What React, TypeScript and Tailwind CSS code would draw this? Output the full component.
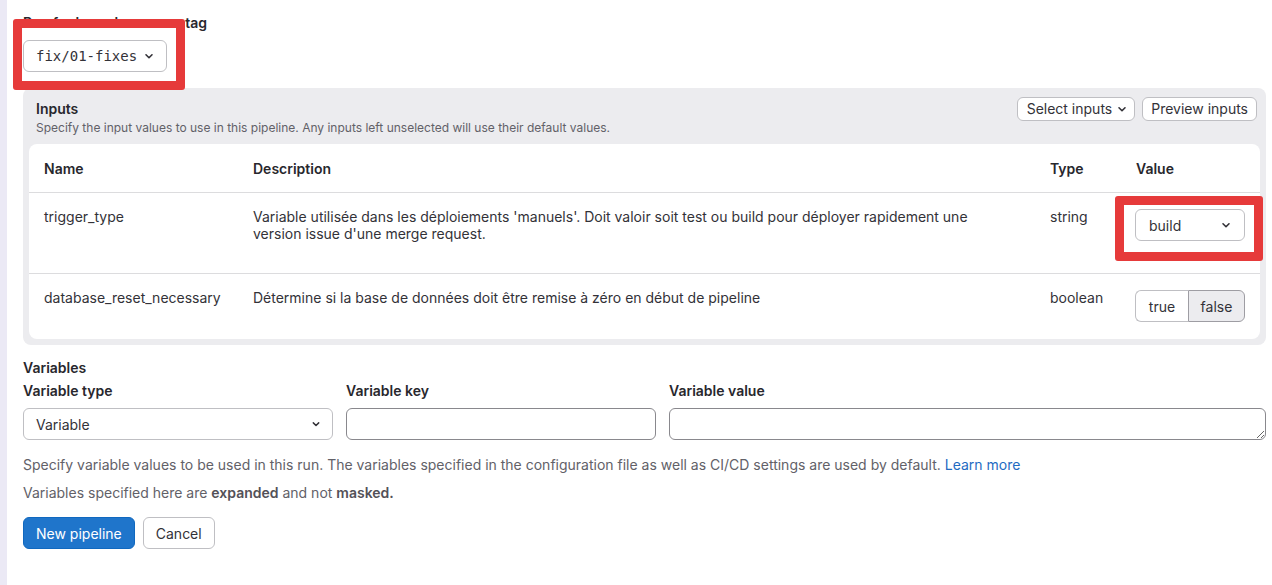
import React from "react";

function Chevron({ className = "" }: { className?: string }) {
  return (
    <svg width="16" height="16" viewBox="0 0 16 16" className={className} fill="none">
      <path d="M5 6.75l3 3 3-3" stroke="currentColor" strokeWidth="1.6" strokeLinecap="round" strokeLinejoin="round" />
    </svg>
  );
}

const rows = [
  {
    name: "trigger_type",
    description:
      "Variable utilisée dans les déploiements 'manuels'. Doit valoir soit test ou build pour déployer rapidement une version issue d'une merge request.",
    type: "string",
    kind: "select",
    rowClass: "grid grid-cols-[209px_797px_86px_1fr] h-[81px] border-b border-[#dcdcde] leading-[17px]",
  },
  {
    name: "database_reset_necessary",
    description: "Détermine si la base de données doit être remise à zéro en début de pipeline",
    type: "boolean",
    kind: "toggle",
    rowClass: "grid grid-cols-[209px_797px_86px_1fr] min-h-[65px] pb-[16px] leading-[17px]",
  },
];

export default function App() {
  return (
    <div className="relative flex min-h-[585px] bg-white text-[14px] text-[#333238] [font-family:Inter,'Noto_Sans',sans-serif]">
      <div className="w-[7px] shrink-0 bg-[#ebe9f5]" />

      <div className="flex-1 pl-4 pr-1.5">
        {/* branch selector */}
        <div className="pt-[13px] text-[14px] font-semibold leading-5 text-[#28272d]">Run for branch name or tag</div>
        <button className="mt-[7px] flex h-8 items-center gap-1 rounded-md border border-[#bfbfc3] bg-white pl-[12px] pr-[9px] text-[#333238] [font-family:'DejaVu_Sans_Mono','Liberation_Mono',monospace]">
          <span className="text-[14px]">fix/01-fixes</span>
          <Chevron />
        </button>

        {/* inputs panel */}
        <div className="mt-4 rounded-lg bg-[#ececef] pb-1.5">
          <div className="flex items-start justify-between pb-[8px] pl-[13px] pr-[9px] pt-[9px]">
            <div className="pt-[2px]">
              <div className="font-semibold leading-5 text-[#28272d]">Inputs</div>
              <div className="mt-[1px] text-[12px] leading-4 text-[#626168]">
                Specify the input values to use in this pipeline. Any inputs left unselected will use their default values.
              </div>
            </div>
            <div className="flex gap-[7px]">
              <button className="flex h-6 items-center gap-0.5 rounded-md border border-[#bfbfc3] bg-white pl-[9px] pr-[4px] leading-5">
                Select inputs
                <Chevron />
              </button>
              <button className="flex h-6 items-center rounded-md border border-[#bfbfc3] bg-white px-[8px] leading-5">
                Preview inputs
              </button>
            </div>
          </div>

          <div className="mx-1.5 rounded-lg bg-white">
            <div className="grid h-[49px] grid-cols-[209px_797px_86px_1fr] items-center border-b border-[#dcdcde] font-semibold text-[#28272d]">
              <div className="px-[15px]">Name</div>
              <div className="px-[15px]">Description</div>
              <div className="px-[15px]">Type</div>
              <div className="px-[15px]">Value</div>
            </div>
            {rows.map((r) => (
              <div key={r.name} className={r.rowClass}>
                <div className="px-[15px] pt-[15px]">{r.name}</div>
                <div className="pl-[15px] pr-[30px] pt-[15px]">{r.description}</div>
                <div className="px-[15px] pt-[15px]">{r.type}</div>
                <div className="pl-[14px] pt-4">
                  {r.kind === "select" ? (
                    <button className="flex h-8 w-[110px] items-center justify-between rounded-md border border-[#bfbfc3] bg-white pl-[13px] pr-[10px]">
                      build
                      <Chevron />
                    </button>
                  ) : (
                    <div className="flex h-8 w-[110px]">
                      <button className="w-[53px] rounded-l-md border border-r-0 border-[#bfbfc3] bg-white">true</button>
                      <button className="flex-1 rounded-r-md border border-[#9e9da3] bg-[#ececef]">false</button>
                    </div>
                  )}
                </div>
              </div>
            ))}
          </div>
        </div>

        {/* variables */}
        <div className="mt-[13px] font-semibold leading-5 text-[#28272d]">Variables</div>
        <div className="mt-[3px] grid grid-cols-[310px_310px_1fr] gap-[13px]">
          <div>
            <div className="font-semibold leading-5 text-[#28272d]">Variable type</div>
            <button className="mt-[7px] flex h-8 w-full items-center justify-between rounded-md border border-[#bfbfc3] bg-white pl-[12px] pr-[8px]">
              Variable
              <Chevron className="scale-90" />
            </button>
          </div>
          <div>
            <div className="font-semibold leading-5 text-[#28272d]">Variable key</div>
            <input className="mt-[7px] block h-8 w-full rounded-md border border-[#89888d] bg-white px-3 outline-none" />
          </div>
          <div>
            <div className="font-semibold leading-5 text-[#28272d]">Variable value</div>
            <textarea
              rows={1}
              className="mt-[7px] block h-8 min-h-8 w-full rounded-md border border-[#89888d] bg-white px-3 outline-none"
            />
          </div>
        </div>

        <p className="mt-[15px] leading-5 text-[#626168]">
          Specify variable values to be used in this run. The variables specified in the configuration file as well as CI/CD
          settings are used by default. <span className="text-[#1f6bc2]">Learn more</span>
        </p>
        <p className="mt-2 leading-5 text-[#626168]">
          Variables specified here are <b className="font-semibold text-[#535158]">expanded</b> and not{" "}
          <b className="font-semibold text-[#535158]">masked.</b>
        </p>

        <div className="mt-[14px] flex gap-2">
          <button className="h-8 rounded-md border border-[#1068bf] bg-[#1f75cb] px-3 text-white">New pipeline</button>
          <button className="h-8 rounded-md border border-[#bfbfc3] bg-white px-3">Cancel</button>
        </div>
      </div>

      {/* annotation boxes */}
      <div className="pointer-events-none absolute left-[13px] top-[19px] h-[71px] w-[172px] rounded-[3px] border-[9px] border-[#e63a3a]" />
      <div className="pointer-events-none absolute left-[1115px] top-[196px] h-[65px] w-[148px] rounded-[3px] border-[9px] border-[#e63a3a]" />
    </div>
  );
}
